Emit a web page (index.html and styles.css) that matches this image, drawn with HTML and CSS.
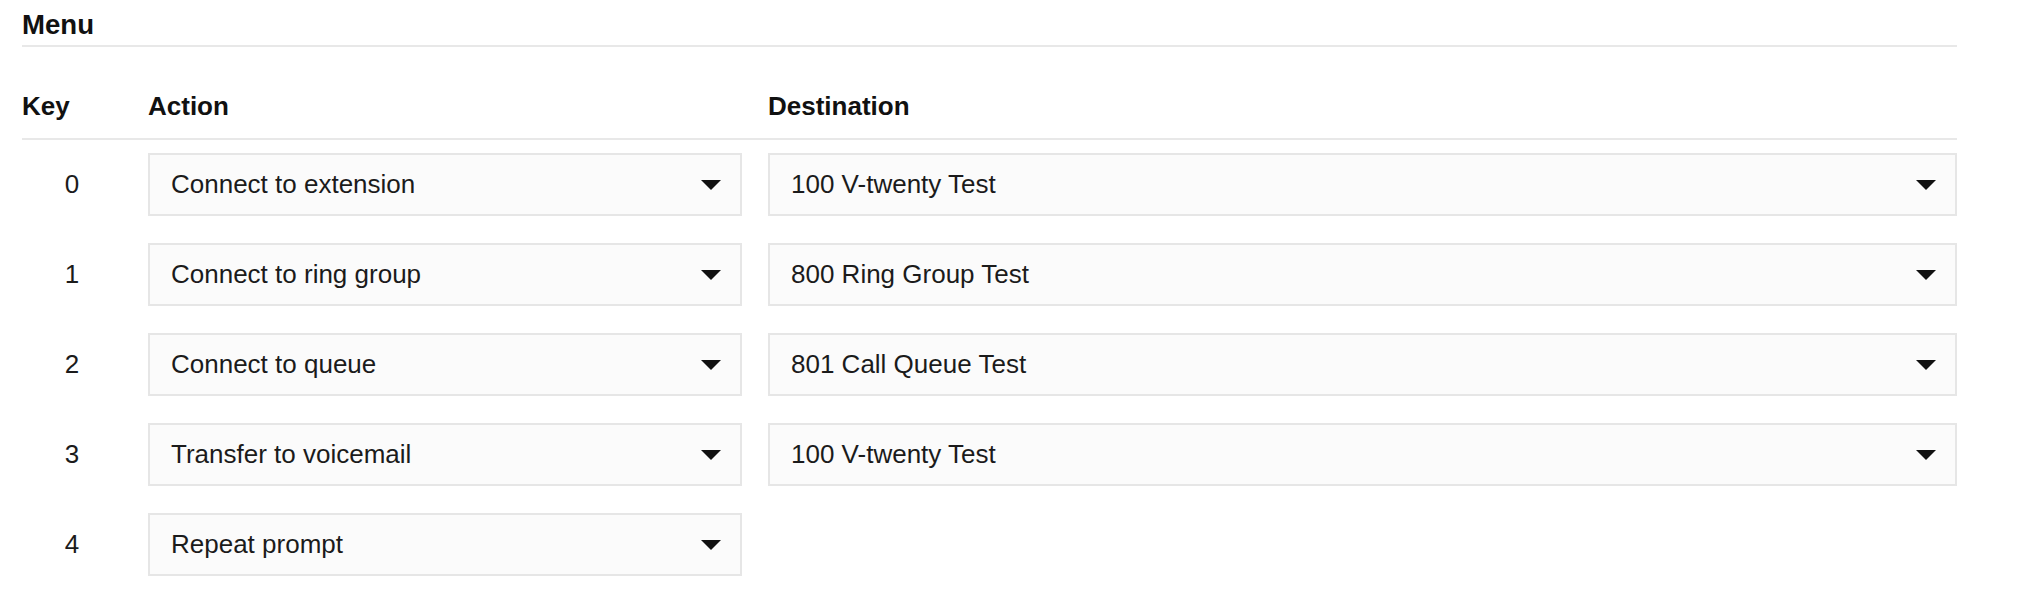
FILE: index.html
```html
<!DOCTYPE html>
<html lang="en">
<head>
<meta charset="utf-8">
<title>Menu</title>
<link rel="stylesheet" href="styles.css">
</head>
<body>
<div class="page">
  <h2 class="title">Menu</h2>
  <div class="grid header">
    <div class="head">Key</div>
    <div class="head">Action</div>
    <div class="head">Destination</div>
  </div>
  <div class="grid rows">
    <div class="key">0</div>
    <div class="select"><span>Connect to extension</span><svg class="caret" viewBox="0 0 20 10"><polygon points="0,0 20,0 10,10"/></svg></div>
    <div class="select"><span>100 V-twenty Test</span><svg class="caret" viewBox="0 0 20 10"><polygon points="0,0 20,0 10,10"/></svg></div>

    <div class="key">1</div>
    <div class="select"><span>Connect to ring group</span><svg class="caret" viewBox="0 0 20 10"><polygon points="0,0 20,0 10,10"/></svg></div>
    <div class="select"><span>800 Ring Group Test</span><svg class="caret" viewBox="0 0 20 10"><polygon points="0,0 20,0 10,10"/></svg></div>

    <div class="key">2</div>
    <div class="select"><span>Connect to queue</span><svg class="caret" viewBox="0 0 20 10"><polygon points="0,0 20,0 10,10"/></svg></div>
    <div class="select"><span>801 Call Queue Test</span><svg class="caret" viewBox="0 0 20 10"><polygon points="0,0 20,0 10,10"/></svg></div>

    <div class="key">3</div>
    <div class="select"><span>Transfer to voicemail</span><svg class="caret" viewBox="0 0 20 10"><polygon points="0,0 20,0 10,10"/></svg></div>
    <div class="select"><span>100 V-twenty Test</span><svg class="caret" viewBox="0 0 20 10"><polygon points="0,0 20,0 10,10"/></svg></div>

    <div class="key">4</div>
    <div class="select"><span>Repeat prompt</span><svg class="caret" viewBox="0 0 20 10"><polygon points="0,0 20,0 10,10"/></svg></div>
    <div class="empty"></div>
  </div>
</div>
</body>
</html>
```

FILE: styles.css
```css
* { box-sizing: border-box; }
html, body { margin: 0; padding: 0; background: #ffffff; }
body {
  font-family: "Liberation Sans", Arial, sans-serif;
  color: #1b1b1b;
}
.page {
  width: 1935px;
  margin-left: 22px;
}
.title {
  margin: 9px 0 0 0;
  font-size: 27.6px;
  line-height: 32px;
  font-weight: bold;
  color: #111111;
  padding-bottom: 4px;
  border-bottom: 2px solid #e8e8e8;
}
.grid {
  display: grid;
  grid-template-columns: 100px 594px 1fr;
  column-gap: 26px;
}
.header {
  margin-top: 43px;
  padding-bottom: 16px;
  border-bottom: 2px solid #e8e8e8;
}
.head {
  font-size: 26px;
  line-height: 32px;
  font-weight: bold;
  color: #111111;
}
.rows {
  margin-top: 13px;
  row-gap: 27px;
}
.key {
  font-size: 26px;
  height: 63px;
  line-height: 63px;
  text-align: center;
  color: #1b1b1b;
}
.select {
  height: 63px;
  border: 2px solid #e6e6e6;
  background: #fbfbfb;
  display: flex;
  align-items: center;
  justify-content: space-between;
  padding: 0 19px 0 21px;
  font-size: 26px;
  line-height: 59px;
  color: #1b1b1b;
}
.caret {
  width: 20px;
  height: 10px;
  fill: #111111;
  flex: none;
}
```
